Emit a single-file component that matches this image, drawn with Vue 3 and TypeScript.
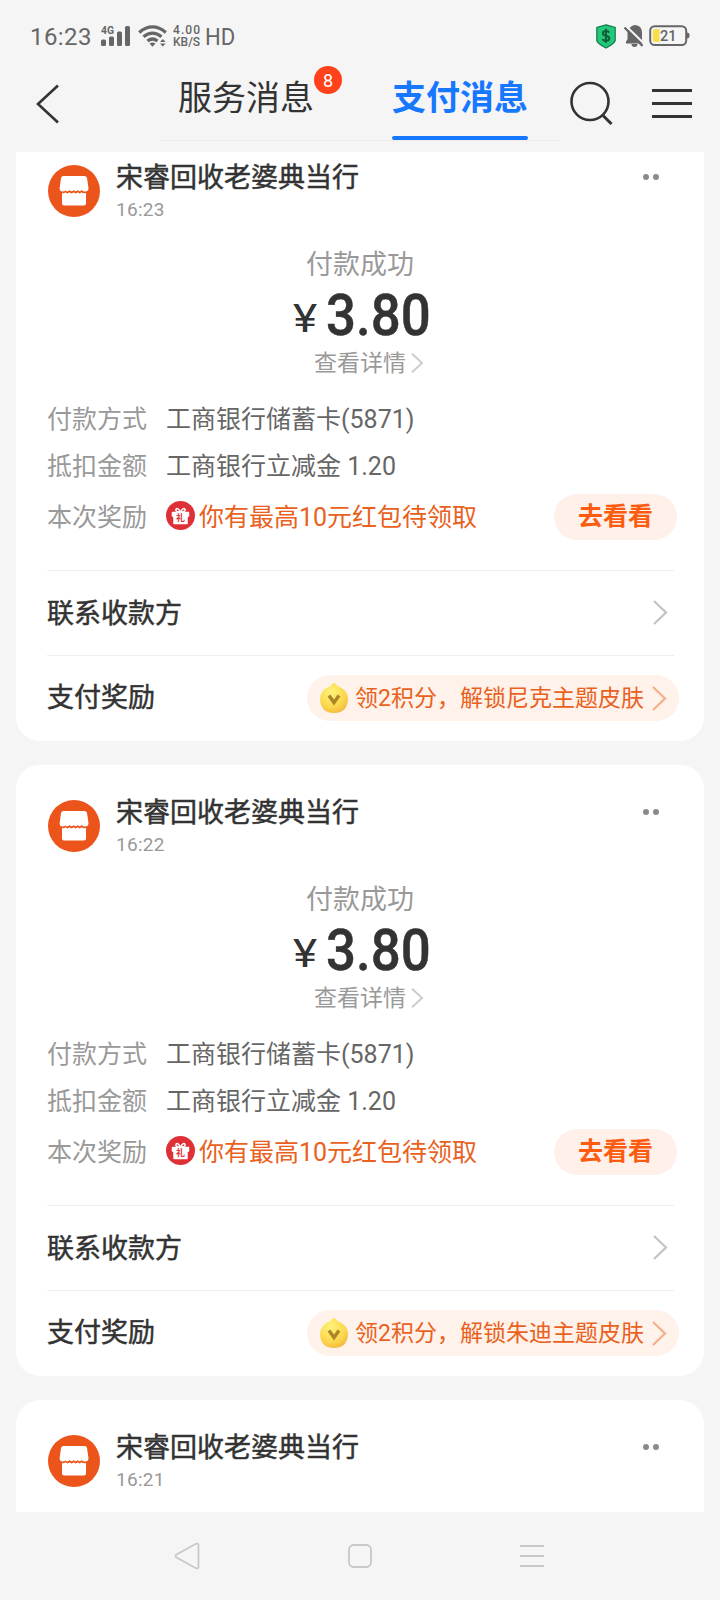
<script setup lang="ts">
interface Bill {
  time: string
  theme?: string
}

const merchant = '宋睿回收老婆典当行'
const bills: Bill[] = [
  { time: '16:23', theme: '尼克' },
  { time: '16:22', theme: '朱迪' },
  { time: '16:21' },
]
</script>

<template>
  <div class="screen">
    <header class="status">
      <span class="clock">16:23</span>
      <svg class="signal" width="30" height="24" viewBox="0 0 30 24">
        <text x="0" y="9.5" font-size="10.5" font-weight="700" textLength="13" lengthAdjust="spacingAndGlyphs">4G</text>
        <rect x="0" y="15.500" width="5" height="6.500" rx="1.500" />
        <rect x="8" y="12.500" width="5" height="9.500" rx="1.500" />
        <rect x="16" y="7.500" width="5" height="14.500" rx="1.500" />
        <rect x="24" y="2" width="5" height="20" rx="1.500" />
      </svg>
      <svg class="wifi" width="30" height="24" viewBox="0 0 30 24">
        <g fill="none" stroke="#666" stroke-width="3.200">
          <path d="M1.200 8.400Q14.500 -2.600 27.800 8.400" />
          <path d="M5.500 12.800Q14.500 5.400 23.500 12.800" />
          <path d="M9.500 17Q14.500 13 19.500 17" />
        </g>
        <path d="M11.500 19.500Q14.500 17.500 17.500 19.500L14.500 22.700Z" />
        <path d="M22 18L24.800 15L27.600 18ZM22 19.500L24.800 22.500L27.600 19.500Z" />
      </svg>
      <div class="speed"><span>4.00</span><span>KB/S</span></div>
      <span class="hd">HD</span>
      <svg class="shield" width="20" height="25" viewBox="0 0 20 25">
        <path d="M10 .8L19.200 3.500V16.500Q18.500 19.500 10 24Q1.500 19.500 .8 16.500V3.500Z" fill="#22c97a" stroke="#14794a" stroke-width="1.200" />
        <path d="M13.200 8.700Q12.500 7 10 7Q6.900 7 6.900 9.300Q6.900 11.300 10 11.800Q13.300 12.400 13.300 14.400Q13.300 16.700 10 16.700Q7.300 16.700 6.600 14.800M10 4.800V18.800" fill="none" stroke="#125c38" stroke-width="2" />
      </svg>
      <svg class="bell" width="20" height="24" viewBox="0 0 20 24">
        <path d="M6 3.500Q8 1 11 1Q18 1.500 18 9V15.500L19.500 19.500H2V17.500L3.500 15.500V7Z" />
        <path d="M7.500 20H13.500Q13.500 23 10.500 23Q7.500 23 7.500 20Z" />
        <path d="M1.500 1.500L20 19.500" stroke="#f5f5f5" stroke-width="2" />
        <path d="M.5 3.500L18.500 22" stroke="#666" stroke-width="2.200" />
      </svg>
      <svg class="battery" width="41" height="22" viewBox="0 0 41 22">
        <rect x="1.200" y="1.200" width="36" height="18.800" rx="4.500" fill="none" stroke="#666" stroke-width="2" />
        <path d="M38 7.500Q40.500 7.500 40.500 10.500Q40.500 13.500 38 13.500Z" />
        <path d="M6.500 4H10.500V17H6.500Q3.800 17 3.800 14V7Q3.800 4 6.500 4Z" fill="#f9de4b" />
        <text x="11" y="16" font-size="15.500" font-weight="500" textLength="16.500" lengthAdjust="spacingAndGlyphs">21</text>
      </svg>
    </header>

    <nav class="nav">
      <svg class="back" width="24" height="40" viewBox="0 0 24 40">
        <path d="M22 1.500L2 20L22 38.500" fill="none" stroke="#333" stroke-width="2.600" />
      </svg>
      <div class="tabs">
        <div class="tab">服务消息<span class="badge">8</span></div>
        <div class="tab active">支付消息</div>
      </div>
      <svg class="search" width="44" height="46" viewBox="0 0 44 46">
        <circle cx="20" cy="20.500" r="18.500" fill="none" stroke="#333" stroke-width="2.600" />
        <path d="M32.500 34L41.500 43" stroke="#333" stroke-width="3" />
      </svg>
      <div class="menu"><i /><i /><i /></div>
    </nav>

    <main class="feed">
      <article v-for="bill in bills" :key="bill.time" class="card">
        <div class="head">
          <svg class="avatar" width="52" height="52" viewBox="0 0 52 52">
            <circle cx="26" cy="26" r="26" fill="#eb541b" />
            <path d="M15.500 11H36.500Q38.500 11 39 13L40.500 23Q40.500 26.500 37 26.500Q35 26.500 33.500 25Q31.500 27.500 29.800 25Q27.500 27.500 25.800 25Q23.500 27.500 21.500 25Q19.500 27.500 17.500 25.500Q16.500 26.500 14.500 26.500Q11.500 26.500 11.700 23L13 13Q13.500 11 15.500 11Z" fill="#fff" />
            <path d="M14 28Q16 28.500 17.500 27.300Q19.500 29.500 21.500 27.300Q23.500 29.500 25.800 27.300Q27.500 29.500 29.800 27.300Q31.500 29.500 33.500 27.300Q35 28.500 38 28V38.500Q38 40.500 36 40.500H16Q14 40.500 14 38.500Z" fill="#fff" />
          </svg>
          <div class="who">
            <div class="name">{{ merchant }}</div>
            <div class="time">{{ bill.time }}</div>
          </div>
          <div class="more"><i /><i /></div>
        </div>

        <template v-if="bill.theme">
          <div class="result">付款成功</div>
          <div class="amount"><span class="yen">¥</span><span class="num">3.80</span></div>
          <div class="detail">
            <span>查看详情</span>
            <svg width="13" height="20" viewBox="0 0 13 20"><path d="M1 .8L11 10L1 19.200" fill="none" stroke="#ccc" stroke-width="2" /></svg>
          </div>

          <div class="row"><span class="label">付款方式</span><span class="value">工商银行储蓄卡(5871)</span></div>
          <div class="row"><span class="label">抵扣金额</span><span class="value">工商银行立减金 1.20</span></div>
          <div class="row reward">
            <span class="label">本次奖励</span>
            <svg class="gift" width="29" height="29" viewBox="0 0 29 29">
              <circle cx="14.500" cy="14.500" r="14.500" fill="#de3036" />
              <path d="M14.500 11Q9 11 10 8.300Q11.800 6 14.500 11Q17.200 6 19 8.300Q20 11 14.500 11" fill="none" stroke="#fff" stroke-width="1.500" />
              <path d="M6.500 11.500H22.500V15L21 16V22.500H8V16L6.500 15Z" fill="#fff" stroke="#fff" stroke-linejoin="round" stroke-width="1.500" />
              <text x="10" y="20" font-size="9" font-weight="700" fill="#de3036">礼</text>
            </svg>
            <span class="promo">你有最高10元红包待领取</span>
            <span class="go">去看看</span>
          </div>

          <div class="line contact">
            <span>联系收款方</span>
            <svg width="15" height="25" viewBox="0 0 15 25"><path d="M1 1L13 12.500L1 24" fill="none" stroke="#c4c4c4" stroke-width="2.300" /></svg>
          </div>
          <div class="line points">
            <span>支付奖励</span>
            <div class="pill">
              <svg class="coin" width="28" height="32" viewBox="0 0 28 32">
                <defs>
                  <radialGradient id="gold" cx=".4" cy=".3" r=".75">
                    <stop offset="0" stop-color="#fff27a" />
                    <stop offset=".65" stop-color="#fbd84e" />
                    <stop offset="1" stop-color="#f5b83d" />
                  </radialGradient>
                </defs>
                <path d="M14 1Q15.500 1 17.500 4Q28 7.500 28 17.500Q27 31 14 31Q1 31 0 17.500Q0 7.500 10.500 4Q12.500 1 14 1Z" fill="url(#gold)" />
                <path d="M9 13.500L14 20.500L19 13.500" fill="none" stroke="#ab8526" stroke-width="3.400" />
              </svg>
              <span class="tip">领2积分，解锁{{ bill.theme }}主题皮肤</span>
              <svg width="15" height="25" viewBox="0 0 15 25"><path d="M1 1L13 12.500L1 24" fill="none" stroke="#f3b08e" stroke-width="2.300" /></svg>
            </div>
          </div>
        </template>
      </article>
    </main>

    <footer class="keys">
      <svg width="26" height="28" viewBox="0 0 26 28"><path d="M22 1.800Q24.500 1 24.500 3.500V24.500Q24.500 27 22 26.200L2.500 15.500Q.5 14 2.500 12.500Z" fill="none" stroke="#c8c8c8" stroke-width="1.700" /></svg>
      <svg width="26" height="26" viewBox="0 0 26 26"><rect x="2" y="2" width="22" height="22" rx="4.500" fill="none" stroke="#c8c8c8" stroke-width="1.800" /></svg>
      <svg width="24" height="24" viewBox="0 0 24 24"><path d="M0 2H24M0 12H24M0 22H24" stroke="#c8c8c8" stroke-width="2" /></svg>
    </footer>
  </div>
</template>

<style>
body {
  background: #f5f5f5;
}
</style>

<style scoped>
.screen {
  display: flex;
  flex-direction: column;
  width: 720px;
  height: 1600px;
  overflow: hidden;
  background: #f5f5f5;
  color: #333;
  font-family: Roboto, "Noto Sans CJK SC", sans-serif;
  white-space: nowrap;
}
svg {
  display: block;
  flex: none;
}
.status {
  display: flex;
  align-items: center;
  height: 72px;
  padding: 0 30px;
  color: #666;
  fill: #666;
}
.clock {
  width: 71px;
  padding-top: 2px;
  font-size: 24px;
  letter-spacing: 0.4px;
}
.wifi {
  margin-left: 7px;
}
.speed {
  display: flex;
  flex-direction: column;
  width: 32px;
  margin-left: 5px;
  font-size: 12px;
  font-weight: 500;
  line-height: 12px;
}
.speed span:first-child {
  letter-spacing: 1.1px;
}
.hd {
  flex: 1;
  padding-top: 2px;
  font-size: 24px;
  transform: scaleX(0.92);
  transform-origin: 0 50%;
}
.bell {
  margin-left: 8px;
}
.battery {
  margin-left: 5px;
}
.nav {
  display: flex;
  height: 80px;
}
.back {
  margin: 12px 0 0 36px;
}
.tabs {
  display: flex;
  gap: 78px;
  width: 382px;
  height: 68px;
  margin-left: 100px;
  padding-left: 18px;
  border-bottom: 1px solid #ececec;
}
.tab {
  position: relative;
  height: 68px;
  font-size: 34px;
  line-height: 52px;
}
.active {
  color: #1677ff;
  font-weight: 700;
}
.active::after {
  content: "";
  position: absolute;
  left: 0;
  top: 64px;
  width: 136px;
  height: 4px;
  border-radius: 2px;
  background: #1677ff;
}
.badge {
  position: absolute;
  left: 136px;
  top: -6px;
  width: 28px;
  height: 28px;
  border-radius: 50%;
  background: #ff411c;
  color: #fff;
  font-size: 18px;
  line-height: 29px;
  text-align: center;
}
.search {
  margin: 9px 0 0 10px;
}
.menu {
  display: flex;
  flex-direction: column;
  gap: 10px;
  width: 40px;
  margin: 17px 0 0 38px;
}
.menu i {
  height: 3px;
  background: #333;
}
.feed {
  height: 1360px;
  overflow: hidden;
}
.card {
  box-sizing: border-box;
  width: 688px;
  height: 611px;
  margin: 0 auto 24px;
  padding: 35px 27px 0 31px;
  border-radius: 24px;
  background: #fff;
}
.card:first-child {
  margin-top: -22px;
}
.head {
  display: flex;
  height: 78px;
  padding-left: 1px;
}
.who {
  flex: 1;
  margin-left: 16px;
}
.name {
  height: 32px;
  margin-top: -3px;
  font-size: 27px;
  line-height: 32px;
  -webkit-text-stroke: 0.5px #333;
}
.time {
  margin-top: 4px;
  font-size: 19px;
  line-height: 24px;
  letter-spacing: 0.3px;
  color: #999;
}
.more {
  display: flex;
  gap: 4px;
  margin: 9px 18px 0 0;
}
.more i {
  width: 6px;
  height: 6px;
  border-radius: 50%;
  background: #8a8a8a;
}
.result {
  box-sizing: border-box;
  height: 40px;
  margin-right: 4px;
  padding-top: 2px;
  font-size: 27px;
  line-height: 40px;
  text-align: center;
  color: #999;
}
.amount {
  display: flex;
  height: 66px;
  padding-left: 246px;
  line-height: 64px;
}
.yen {
  box-sizing: border-box;
  width: 33px;
  padding-top: 4px;
  font-size: 39px;
  transform: scaleX(1.18);
  transform-origin: 0 50%;
}
.num {
  width: 103px;
  font-size: 58px;
  font-weight: 500;
  -webkit-text-stroke: 0.5px #333;
  transform: scaleX(0.91);
  transform-origin: 0 50%;
}
.detail {
  display: flex;
  align-items: center;
  gap: 5px;
  height: 30px;
  margin-top: -1px;
  padding-left: 267px;
  font-size: 23px;
  color: #999;
}
.detail span {
  margin-top: -5px;
}
.row {
  display: flex;
  align-items: center;
  height: 47px;
  font-size: 25px;
}
.detail + .row {
  margin-top: 15px;
}
.label {
  width: 119px;
  color: #999;
}
.value {
  color: #666;
}
.reward {
  height: 60px;
}
.reward .label,
.reward .promo {
  margin-top: -4px;
}
.gift {
  margin-top: -3px;
}
.promo {
  flex: 1;
  margin-left: 4px;
  color: #e9611d;
}
.go {
  width: 123px;
  height: 46px;
  border-radius: 23px;
  background: #fff0ea;
  color: #fb5c10;
  font-weight: 700;
  line-height: 46px;
  text-align: center;
}
.line {
  display: flex;
  align-items: center;
  justify-content: space-between;
  box-sizing: border-box;
  width: 627px;
  height: 85px;
  border-top: 1px solid #eee;
  font-size: 27px;
}
.line > span {
  -webkit-text-stroke: 0.5px #333;
}
.contact > span {
  margin-top: -2px;
}
.points > span {
  margin-top: -5px;
}
.reward + .line {
  margin-top: 23px;
}
.contact {
  padding: 0 6px 2px 0;
}
.pill {
  display: flex;
  align-items: center;
  flex: none;
  box-sizing: border-box;
  width: 372px;
  height: 46px;
  margin-right: -5px;
  padding: 0 12px 0 13px;
  border-radius: 23px;
  background: #fff2ea;
  font-size: 23px;
  color: #e9611d;
}
.tip {
  flex: 1;
  margin: -4px 0 0 7px;
}
.keys {
  display: flex;
  justify-content: space-between;
  align-items: center;
  height: 88px;
  padding: 0 176px 0 174px;
}
</style>
